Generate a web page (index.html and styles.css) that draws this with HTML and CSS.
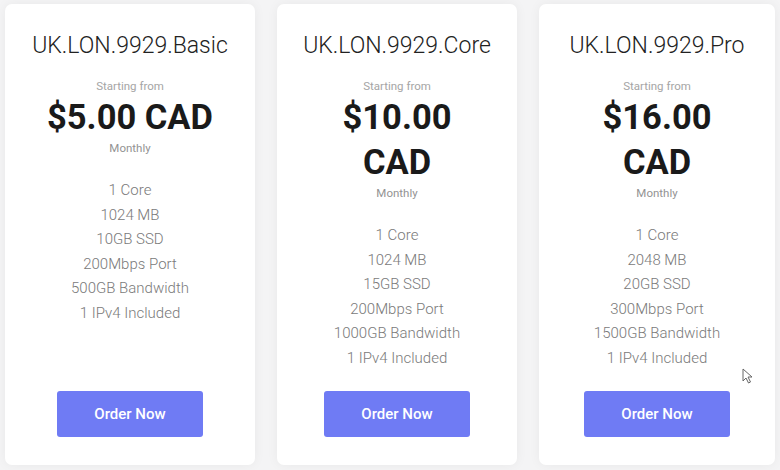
FILE: index.html
```html
<!DOCTYPE html>
<html>
<head>
<meta charset="utf-8">
<link rel="stylesheet" href="styles.css">
</head>
<body>
<div class="plans">
  <div class="card card-a">
    <h3 class="title">UK.LON.9929.Basic</h3>
    <div class="from">Starting from</div>
    <div class="price">$5.00 CAD</div>
    <div class="cycle">Monthly</div>
    <ul class="features">
      <li>1 Core</li>
      <li>1024 MB</li>
      <li>10GB SSD</li>
      <li>200Mbps Port</li>
      <li>500GB Bandwidth</li>
      <li>1 IPv4 Included</li>
    </ul>
    <a class="btn">Order Now</a>
  </div>
  <div class="card card-b">
    <h3 class="title">UK.LON.9929.Core</h3>
    <div class="from">Starting from</div>
    <div class="price">$10.00<br>CAD</div>
    <div class="cycle">Monthly</div>
    <ul class="features">
      <li>1 Core</li>
      <li>1024 MB</li>
      <li>15GB SSD</li>
      <li>200Mbps Port</li>
      <li>1000GB Bandwidth</li>
      <li>1 IPv4 Included</li>
    </ul>
    <a class="btn">Order Now</a>
  </div>
  <div class="card card-c">
    <h3 class="title">UK.LON.9929.Pro</h3>
    <div class="from">Starting from</div>
    <div class="price">$16.00<br>CAD</div>
    <div class="cycle">Monthly</div>
    <ul class="features">
      <li>1 Core</li>
      <li>2048 MB</li>
      <li>20GB SSD</li>
      <li>300Mbps Port</li>
      <li>1500GB Bandwidth</li>
      <li>1 IPv4 Included</li>
    </ul>
    <a class="btn">Order Now</a>
    <svg class="cursor" width="12" height="16" viewBox="0 0 12 16"><path d="M1 1 L1 13 L4 10 L6.5 15 L8.5 14 L6 9 L10 9 Z" fill="#fff" stroke="#666" stroke-width="1" stroke-linejoin="round"/></svg>
  </div>
</div>
</body>
</html>
```
FILE: styles.css
```css
* { box-sizing: border-box; }
html, body { margin: 0; padding: 0; }
body {
  background: #f4f4f5;
  font-family: Roboto, "Noto Sans", sans-serif;
  width: 780px;
  height: 470px;
  overflow: hidden;
}
.plans {
  display: grid;
  grid-template-columns: 250px 240px 236px;
  column-gap: 22px;
  padding: 4px 0 0 5px;
}
.card {
  position: relative;
  background: #fff;
  border-radius: 7px;
  box-shadow: 0 0 12px rgba(0, 0, 0, 0.05);
  height: 461px;
  display: flex;
  flex-direction: column;
  align-items: center;
  text-align: center;
  padding: 27px 0 28px;
}
.title {
  margin: 0;
  font-family: "Roboto Light", Roboto, sans-serif;
  font-weight: 300;
  font-size: 23px;
  line-height: 30px;
  color: #222;
}
.from {
  margin-top: 17px;
  font-size: 11.5px;
  line-height: 16px;
  font-weight: 400;
  color: #a5a5a5;
}
.price {
  margin-top: 1px;
  font-size: 34.5px;
  line-height: 45px;
  font-weight: 700;
  color: #1a1a1a;
}
.cycle {
  font-size: 11.5px;
  line-height: 16px;
  color: #939393;
}
.features {
  list-style: none;
  margin: 22px 0 0;
  padding: 0;
  font-family: "Roboto Light", Roboto, sans-serif;
  font-size: 15px;
  font-weight: 300;
  line-height: 24.6px;
  color: #7a7a7a;
}
.btn {
  margin-top: auto;
  width: 146px;
  height: 46px;
  display: flex;
  align-items: center;
  justify-content: center;
  background: #6f7bf4;
  border-radius: 3px;
  color: #fff;
  font-weight: 500;
  font-size: 15px;
}
.cursor {
  position: absolute;
  left: 203px;
  top: 364px;
}
```
